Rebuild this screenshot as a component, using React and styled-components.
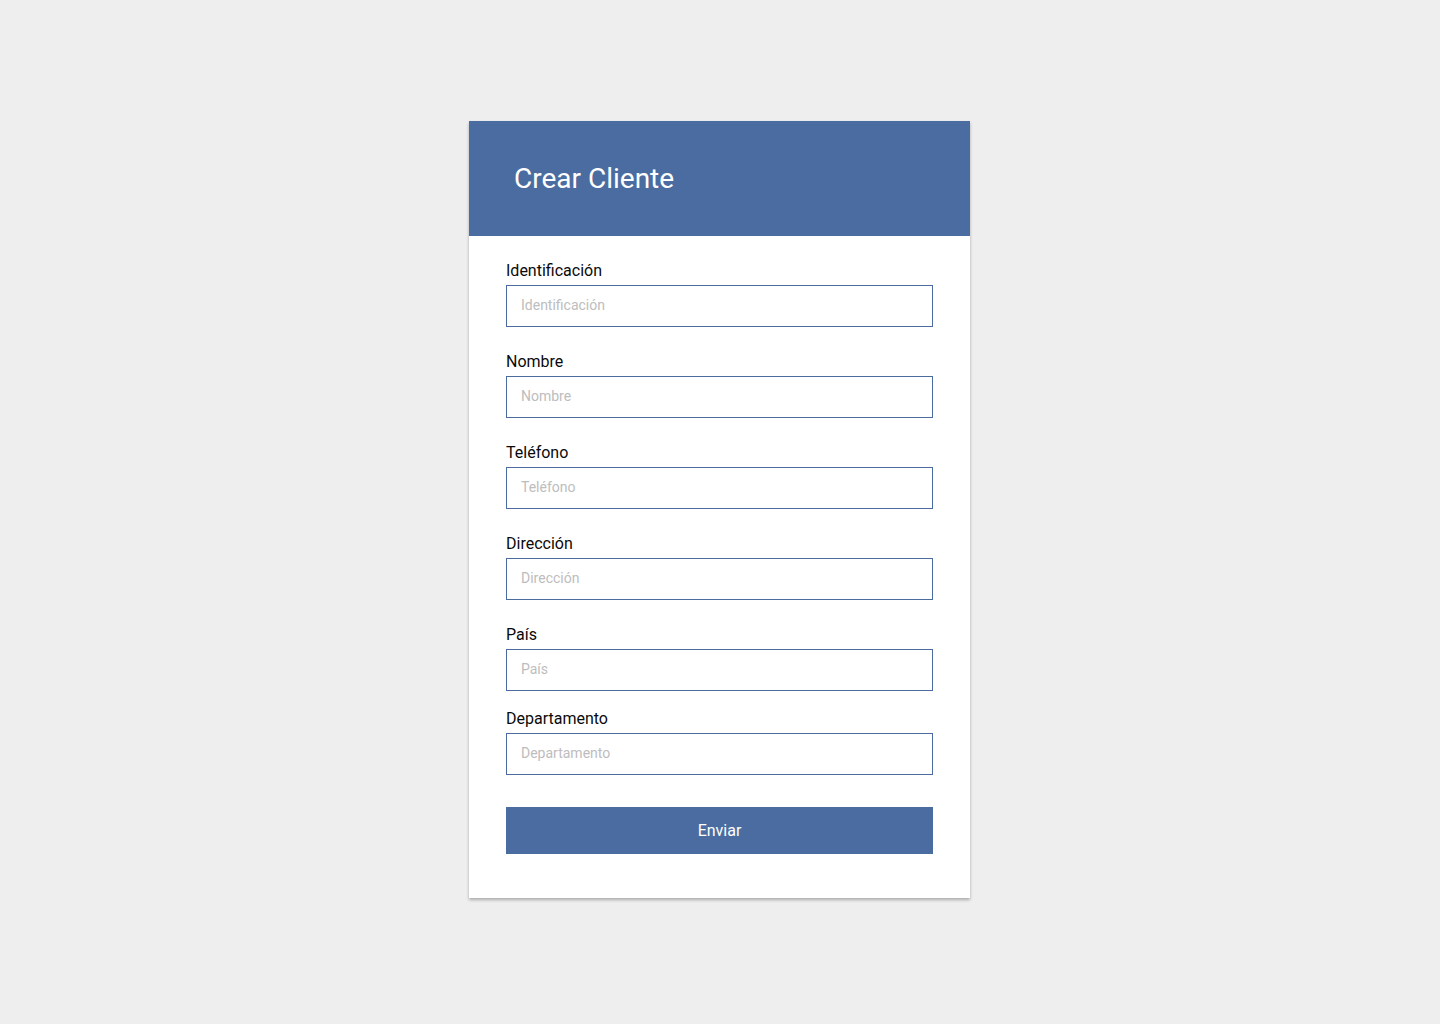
import React from "react";
import styled, { createGlobalStyle } from "styled-components";

const Global = createGlobalStyle`
  html, body { margin: 0; padding: 0; background: #eeeeee; }
  body { font-family: Roboto, "Liberation Sans", sans-serif; }
  * { box-sizing: border-box; }
`;

const Page = styled.div`
  min-height: 1024px;
  display: flex;
  justify-content: center;
  align-items: flex-start;
  padding-top: 121px;
  padding-right: 1px;
`;

const Card = styled.div`
  width: 501px;
  background: #ffffff;
  box-shadow: 0 2px 3px rgba(0, 0, 0, 0.28);
`;

const Header = styled.div`
  height: 115px;
  background: #4a6ca0;
  display: flex;
  align-items: center;
  padding-left: 45px;
`;

const Title = styled.h1`
  margin: 0;
  font-family: Roboto, "Liberation Sans", sans-serif;
  font-weight: 400;
  font-size: 28px;
  color: #ffffff;
`;

const Form = styled.form`
  padding: 25px 37px 44px 37px;
  display: flex;
  flex-direction: column;
`;

const Field = styled.div`
  display: flex;
  flex-direction: column;
  margin-bottom: ${(p) => p.$gap}px;
`;

const Label = styled.label`
  font-size: 16px;
  line-height: 19px;
  color: #0a0a0a;
  margin-bottom: 5px;
`;

const Input = styled.input`
  height: 42px;
  width: 100%;
  border: 1px solid #4a6ca0;
  border-radius: 0;
  padding: 0 14px 2px 14px;
  font-family: Roboto, "Liberation Sans", sans-serif;
  font-size: 14px;
  color: #333;
  outline: none;
  &::placeholder { color: #bdbdbd; }
`;

const Button = styled.button`
  height: 47px;
  width: 100%;
  border: none;
  background: #4a6ca0;
  color: #ffffff;
  font-family: Roboto, "Liberation Sans", sans-serif;
  font-size: 16px;
  cursor: pointer;
`;

const fields = [
  ["Identificación", 25],
  ["Nombre", 25],
  ["Teléfono", 25],
  ["Dirección", 25],
  ["País", 18],
  ["Departamento", 32],
];

export default function App() {
  return (
    <>
      <Global />
      <Page>
        <Card>
          <Header>
            <Title>Crear Cliente</Title>
          </Header>
          <Form onSubmit={(e) => e.preventDefault()}>
            {fields.map(([name, gap]) => (
              <Field key={name} $gap={gap}>
                <Label>{name}</Label>
                <Input placeholder={name} />
              </Field>
            ))}
            <Button type="submit">Enviar</Button>
          </Form>
        </Card>
      </Page>
    </>
  );
}
